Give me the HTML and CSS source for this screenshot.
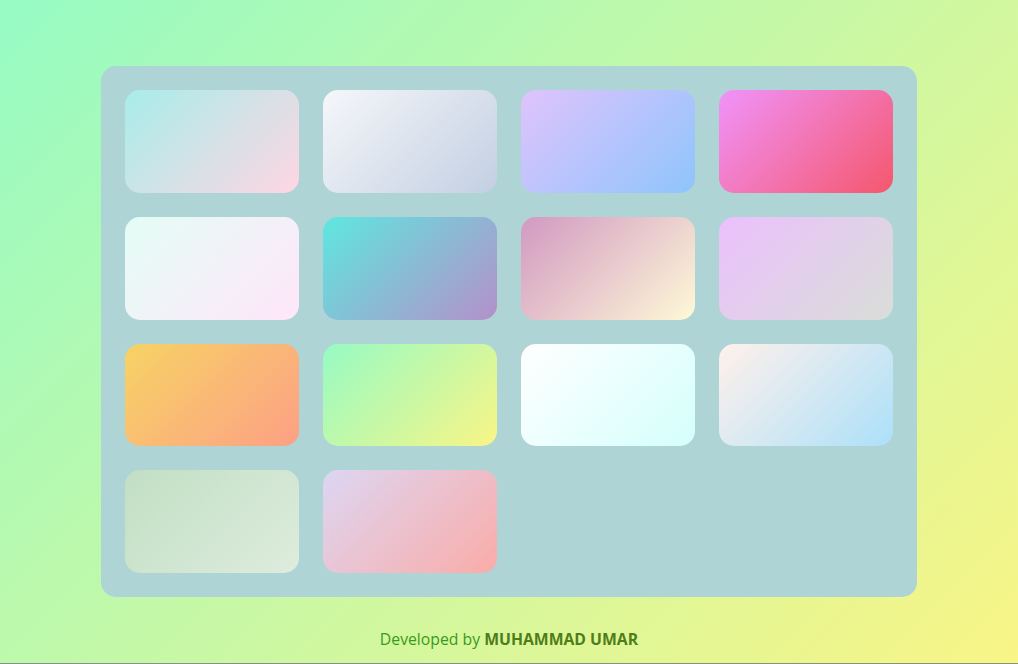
FILE: index.html
```html
<!DOCTYPE html>
<html lang="en">
<head>
<meta charset="utf-8">
<title>Gradients</title>
<link rel="stylesheet" href="styles.css">
</head>
<body>
<main class="page">
  <section class="panel">
    <div class="card g1"></div>
    <div class="card g2"></div>
    <div class="card g3"></div>
    <div class="card g4"></div>
    <div class="card g5"></div>
    <div class="card g6"></div>
    <div class="card g7"></div>
    <div class="card g8"></div>
    <div class="card g9"></div>
    <div class="card g10"></div>
    <div class="card g11"></div>
    <div class="card g12"></div>
    <div class="card g13"></div>
    <div class="card g14"></div>
  </section>
  <footer class="credit">Developed by <strong>MUHAMMAD UMAR</strong></footer>
</main>
</body>
</html>
```

FILE: styles.css
```css
html, body {
  margin: 0;
  padding: 0;
}

body {
  height: 664px;
  box-sizing: border-box;
  border-bottom: 1px solid #858f8c;
  background: linear-gradient(135deg, #96fbc4 0%, #f9f586 100%);
  font-family: "Open Sans", "Liberation Sans", sans-serif;
  overflow: hidden;
}

.page {
  display: flex;
  flex-direction: column;
  align-items: center;
  padding-top: 66px;
}

.panel {
  width: 816px;
  height: 531px;
  box-sizing: border-box;
  padding: 24px;
  background: #aed4d5;
  border-radius: 15px;
  display: grid;
  grid-template-columns: repeat(4, 1fr);
  grid-template-rows: repeat(4, 1fr);
  gap: 24px;
}

.card {
  border-radius: 15px;
}

.g1 { background: linear-gradient(135deg, #a8edea 0%, #fed6e3 100%); }
.g2 { background: linear-gradient(135deg, #f5f7fa 0%, #c3cfe2 100%); }
.g3 { background: linear-gradient(135deg, #e0c3fc 0%, #8ec5fc 100%); }
.g4 { background: linear-gradient(135deg, #f093fb 0%, #f5576c 100%); }
.g5 { background: linear-gradient(135deg, #e3fdf5 0%, #ffe6fa 100%); }
.g6 { background: linear-gradient(135deg, #5ee7df 0%, #b490ca 100%); }
.g7 { background: linear-gradient(135deg, #d299c2 0%, #fef9d7 100%); }
.g8 { background: linear-gradient(135deg, #ebc0fd 0%, #d9ded8 100%); }
.g9 { background: linear-gradient(135deg, #f6d365 0%, #fda085 100%); }
.g10 { background: linear-gradient(135deg, #96fbc4 0%, #f9f586 100%); }
.g11 { background: linear-gradient(135deg, #ffffff 0%, #d4fffc 100%); }
.g12 { background: linear-gradient(135deg, #fff1eb 0%, #ace0f9 100%); }
.g13 { background: linear-gradient(135deg, #c1dfc4 0%, #deecdd 100%); }
.g14 { background: linear-gradient(135deg, #ddd6f3 0%, #faaca8 100%); }

.credit {
  margin-top: 31px;
  font-size: 15.75px;
  line-height: 22px;
  color: #3a9a1c;
}

.credit strong {
  font-weight: 700;
  color: #4f7d1a;
}
```
